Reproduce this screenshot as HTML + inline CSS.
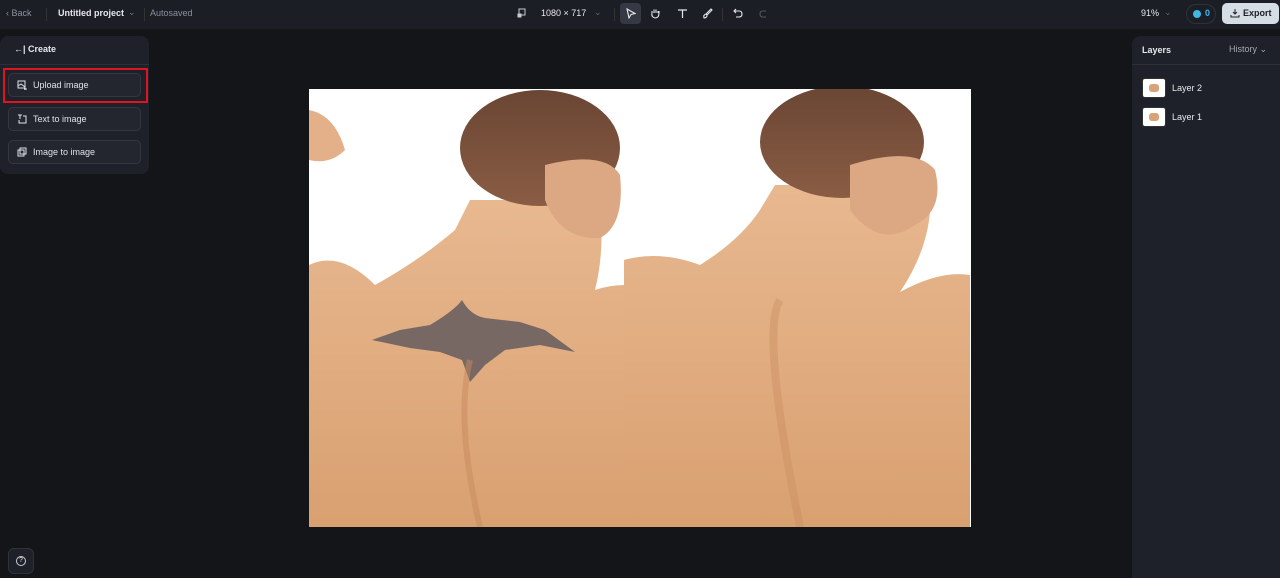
<!DOCTYPE html>
<html><head><style>
*{box-sizing:border-box;margin:0;padding:0}
body{width:1280px;height:578px;background:#131519;font-family:"Liberation Sans",sans-serif;color:#e6e8ec;position:relative;overflow:hidden;font-size:9px}
.top{position:absolute;left:0;top:0;width:1280px;height:29px;background:#1b1e25}
.t{position:absolute;white-space:nowrap}
.panel{position:absolute;background:#1e2129;border-radius:8px}
.btn{position:absolute;left:8px;width:133px;height:24px;border:1px solid #33373f;border-radius:5px;background:#23262e;font-size:9px;color:#dfe2e7;padding-left:24px;line-height:22px}
.btn svg{position:absolute;left:8px;top:6px}
</style></head><body>
<div class="top"></div>
<div class="t" style="left:6px;top:8px;color:#8b9099">&lsaquo; Back</div>
<div style="position:absolute;left:46px;top:8px;width:1px;height:13px;background:#333"></div>
<div class="t" style="left:58px;top:8px;font-weight:bold;color:#e6e8ec">Untitled project</div>
<div class="t" style="left:128px;top:7px;color:#777">&#8964;</div>
<div style="position:absolute;left:144px;top:8px;width:1px;height:13px;background:#333"></div>
<div class="t" style="left:150px;top:8px;color:#8b9099">Autosaved</div>

<svg style="position:absolute;left:517px;top:8px" width="10" height="10" viewBox="0 0 10 10" fill="none" stroke="#c7cad0" stroke-width="1"><rect x="2" y="1" width="6" height="6"/><rect x="1" y="6" width="3" height="3" fill="#c7cad0"/></svg>
<div class="t" style="left:541px;top:8px;color:#e6e8ec">1080 × 717</div>
<div class="t" style="left:594px;top:7px;color:#666">&#8964;</div>
<div style="position:absolute;left:614px;top:8px;width:1px;height:13px;background:#333"></div>
<div style="position:absolute;left:620px;top:3px;width:21px;height:21px;border-radius:4px;background:#353944"></div>
<svg style="position:absolute;left:625px;top:8px" width="11" height="11" viewBox="0 0 11 11" fill="none" stroke="#e6e8ec" stroke-width="1.1"><path d="M2 1 L10 5.5 L6 6.5 L4 10 Z"/></svg>
<svg style="position:absolute;left:650px;top:8px" width="11" height="11" viewBox="0 0 11 11" fill="none" stroke="#e6e8ec" stroke-width="1.1"><path d="M2 5 V3 M4 5 V1.5 M6 5 V1.5 M8 5 V3 M2 5 Q1 9 5 10 Q9 10 9 5 V3"/></svg>
<svg style="position:absolute;left:677px;top:8px" width="11" height="11" viewBox="0 0 11 11" fill="none" stroke="#e6e8ec" stroke-width="1.2"><path d="M1 2 H10 M5.5 2 V10"/></svg>
<svg style="position:absolute;left:702px;top:8px" width="11" height="11" viewBox="0 0 11 11" fill="none" stroke="#e6e8ec" stroke-width="1.1"><path d="M9 1 L4 6 L5 7 L10 2 Z M4 6 Q1 7 2 10 Q5 10 5 7"/></svg>
<div style="position:absolute;left:722px;top:8px;width:1px;height:13px;background:#333"></div>
<svg style="position:absolute;left:733px;top:8px" width="11" height="11" viewBox="0 0 11 11" fill="none" stroke="#e6e8ec" stroke-width="1.1"><path d="M3 1 L1 3 L3 5 M1 3 H6 Q9 3 9 6 Q9 9 6 9 H3"/></svg>
<svg style="position:absolute;left:758px;top:8px" width="11" height="11" viewBox="0 0 11 11" fill="none" stroke="#555" stroke-width="1.1"><path d="M8 3 H5 Q2 3 2 6 Q2 9 5 9 H8"/></svg>

<div class="t" style="left:1141px;top:8px;color:#e6e8ec">91%</div>
<div class="t" style="left:1164px;top:7px;color:#666">&#8964;</div>
<div style="position:absolute;left:1186px;top:4px;width:30px;height:20px;border-radius:10px;border:1px solid #2e323a"></div>
<div style="position:absolute;left:1193px;top:10px;width:8px;height:8px;border-radius:50%;background:#3fb6e6"></div>
<div class="t" style="left:1205px;top:8px;color:#3fb6e6;font-weight:bold">0</div>
<div style="position:absolute;left:1222px;top:3px;width:57px;height:21px;border-radius:5px;background:#d5dde5"></div>
<svg style="position:absolute;left:1230px;top:8px" width="10" height="10" viewBox="0 0 10 10" fill="none" stroke="#222" stroke-width="1"><path d="M5 1 V6 M3 4 L5 6 L7 4 M1 7 V9 H9 V7"/></svg>
<div class="t" style="left:1243px;top:8px;color:#1b1e25;font-weight:bold">Export</div>

<div class="panel" style="left:0;top:36px;width:149px;height:138px"></div>
<div style="position:absolute;left:0;top:64px;width:149px;height:1px;background:#2c3038"></div>
<div class="t" style="left:14px;top:44px;font-weight:bold">&larr;| Create</div>
<div style="position:absolute;left:3px;top:68px;width:145px;height:35px;border:2px solid #e0141e"></div>
<div class="btn" style="top:73px"><svg width="10" height="10" viewBox="0 0 10 10" fill="none" stroke="#dfe2e7" stroke-width="1"><rect x="1" y="1" width="7" height="7"/><path d="M1 6 L4 4 L8 7 M8 7 V10 M7 9 H10"/></svg>Upload image</div>
<div class="btn" style="top:107px"><svg width="10" height="10" viewBox="0 0 10 10" fill="none" stroke="#dfe2e7" stroke-width="1"><path d="M1 1 H5 M3 1 V5 M6 2 H9 V9 H2 V6"/></svg>Text to image</div>
<div class="btn" style="top:140px"><svg width="10" height="10" viewBox="0 0 10 10" fill="none" stroke="#dfe2e7" stroke-width="1"><rect x="3" y="1" width="6" height="6"/><rect x="1" y="3" width="6" height="6"/></svg>Image to image</div>

<div style="position:absolute;left:8px;top:548px;width:26px;height:26px;border-radius:6px;background:#1e2129;border:1px solid #2e323a"></div>
<div style="position:absolute;left:16px;top:556px;width:10px;height:10px;border-radius:50%;border:1px solid #ccc;font-size:7px;text-align:center;line-height:8px">?</div>

<div class="panel" style="left:1132px;top:36px;width:148px;height:542px;border-radius:8px 0 0 0"></div>
<div style="position:absolute;left:1132px;top:64px;width:148px;height:1px;background:#2c3038"></div>
<div class="t" style="left:1142px;top:45px;font-weight:bold">Layers</div>
<div class="t" style="left:1229px;top:44px;color:#a4a8b0">History &#8964;</div>
<div style="position:absolute;left:1142px;top:78px;width:24px;height:20px;border-radius:3px;background:#fff;border:1px solid #333;overflow:hidden"><div style="margin:5px 6px;height:8px;background:#d8a477;border-radius:3px"></div></div>
<div class="t" style="left:1172px;top:83px">Layer 2</div>
<div style="position:absolute;left:1142px;top:107px;width:24px;height:20px;border-radius:3px;background:#fff;border:1px solid #333;overflow:hidden"><div style="margin:5px 6px;height:8px;background:#d8a477;border-radius:3px"></div></div>
<div class="t" style="left:1172px;top:112px">Layer 1</div>

<svg style="position:absolute;left:309px;top:89px" width="662" height="438" viewBox="309 89 662 438">
<defs>
<linearGradient id="sk" x1="0" y1="0" x2="0" y2="1"><stop offset="0" stop-color="#e8b890"/><stop offset="1" stop-color="#d9a070"/></linearGradient>
<linearGradient id="hr" x1="0" y1="0" x2="0" y2="1"><stop offset="0" stop-color="#6a4634"/><stop offset="1" stop-color="#8a5c44"/></linearGradient>
</defs>
<rect x="309" y="89" width="662" height="438" fill="#fff"/>
<path d="M309 110 Q335 115 345 150 Q330 165 309 160 Z" fill="#e4b08a"/>
<path d="M309 265 Q340 250 375 285 Q420 260 455 230 L470 200 L600 200 Q605 250 595 290 Q610 285 624 285 L624 527 L309 527 Z" fill="url(#sk)"/>
<ellipse cx="540" cy="148" rx="80" ry="58" fill="url(#hr)"/>
<path d="M545 165 Q605 150 620 175 Q625 225 600 238 Q560 240 545 200 Z" fill="#dca883"/>
<path d="M372 340 L400 330 L430 325 Q455 310 462 300 Q470 315 485 318 L520 322 L545 330 L575 352 L540 345 L505 350 L485 365 L470 382 L462 360 L440 352 L410 348 Z" fill="#6b6060" opacity="0.9"/>
<path d="M470 360 Q455 420 480 527" stroke="#c88a5c" stroke-width="6" fill="none" opacity="0.5"/>
<path d="M624 260 Q660 250 700 265 Q740 240 760 210 L775 185 L930 185 Q935 240 900 292 Q940 270 970 275 L970 527 L624 527 Z" fill="url(#sk)"/>
<ellipse cx="842" cy="142" rx="82" ry="56" fill="url(#hr)"/>
<path d="M850 165 Q915 145 935 170 Q945 210 915 225 Q880 250 850 210 Z" fill="#dca883"/>
<path d="M780 300 Q760 330 800 527" stroke="#c98c60" stroke-width="8" fill="none" opacity="0.4"/>
</svg>
</body></html>
